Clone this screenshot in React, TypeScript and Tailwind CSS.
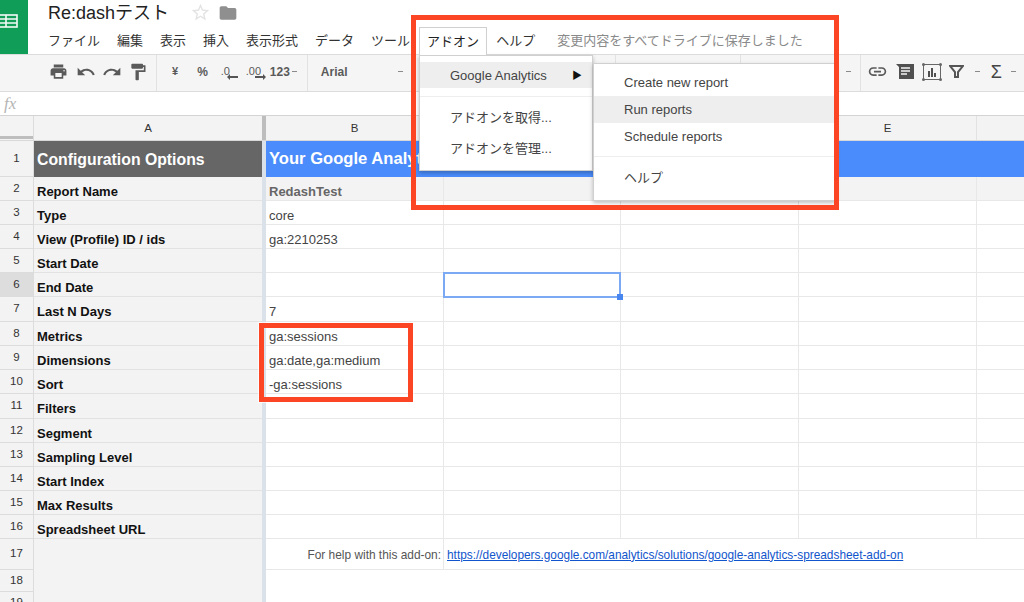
import React from "react";
import { MdPrint, MdUndo, MdRedo, MdFormatPaint, MdLink, MdFolder, MdStarBorder } from "react-icons/md";

const SANS = "font-['Liberation_Sans',Arial,sans-serif]";
const JP = "font-['Liberation_Sans','Noto_Sans_CJK_JP',sans-serif]";

const labels: [number, string, number][] = [
  [2, "Report Name", 24],
  [3, "Type", 24],
  [4, "View (Profile) ID / ids", 24],
  [5, "Start Date", 24],
  [6, "End Date", 24],
  [7, "Last N Days", 25],
  [8, "Metrics", 24],
  [9, "Dimensions", 24],
  [10, "Sort", 24],
  [11, "Filters", 25],
  [12, "Segment", 24],
  [13, "Sampling Level", 24],
  [14, "Start Index", 24],
  [15, "Max Results", 24],
  [16, "Spreadsheet URL", 24],
];
const values: Record<number, string> = {
  2: "RedashTest",
  3: "core",
  4: "ga:2210253",
  7: "7",
  8: "ga:sessions",
  9: "ga:date,ga:medium",
  10: "-ga:sessions",
};

const Drop = () => <span className="w-[5px] h-px bg-[#8a8a8a] block" />;
const Sep = () => <span className="w-px h-[36px] mt-[3px] bg-[#e2e2e2] block" />;

function Row({ n, label, h }: { n: number; label: string; h: number }) {
  const v = values[n];
  const fill = n === 2 ? "bg-[#f3f3f3]" : "";
  return (
    <div className="flex" style={{ height: h }}>
      <div className={`w-[34px] shrink-0 border-r border-b border-[#dcdcdc] flex items-center justify-center text-[11.5px] text-[#333] ${n === 6 ? "bg-[#dddddd]" : "bg-[#f3f3f3]"}`}>
        {n}
      </div>
      <div className="w-[228px] shrink-0 bg-[#f3f3f3] border-b border-[#e2e2e2] flex items-center pl-[3px] pt-[6px] text-[13px] font-bold text-[#111]">
        {label}
      </div>
      <div className="w-[4px] shrink-0 bg-[#dae1e9]" />
      <div className={`w-[178px] shrink-0 border-r border-b border-[#e8e8e8] flex items-center pl-[3px] pt-[6px] text-[13px] ${n === 2 ? "bg-[#f3f3f3] font-bold text-[#666]" : "text-[#444]"}`}>
        {v}
      </div>
      {[177, 178, 178].map((w, i) => (
        <div key={i} className={`shrink-0 border-r border-b border-[#e8e8e8] ${fill}`} style={{ width: w }} />
      ))}
      <div className={`flex-1 border-b border-[#e8e8e8] ${fill}`} />
    </div>
  );
}

export default function App() {
  return (
    <div className={`relative w-[1024px] h-[602px] overflow-hidden bg-white ${SANS}`}>
      {/* top bar */}
      <div className="flex h-[54px] bg-white">
        <div className="w-[28px] bg-[#0f9d58] flex items-start pt-[13px] overflow-hidden">
          <svg width="19" height="17" viewBox="0 0 19 17" fill="none" stroke="#fff" strokeWidth="1.6" opacity="0.95">
            <rect x="-3" y="2" width="20" height="12" />
            <path d="M-3 6h20M-3 10h20M6 2v12" />
          </svg>
        </div>
        <div className="pl-[20px] flex flex-col">
          <div className="flex items-center h-[27px] pb-[2px]">
            <span className={`text-[18px] text-[#222] leading-none ${JP}`}>Re:dashテスト</span>
            <MdStarBorder className="ml-[21px] text-[#e3e3e3]" size={21} />
            <MdFolder className="ml-[7px] text-[#8f8f8f]" size={20} />
          </div>
          <div className={`flex items-center h-[27px] pb-[1px] gap-[17px] text-[13px] text-[#333] ${JP} leading-none`}>
            {["ファイル", "編集", "表示", "挿入", "表示形式", "データ", "ツール"].map((t) => (
              <span key={t}>{t}</span>
            ))}
            <span className="-mx-[8px] px-[7px] h-[28px] mt-[1px] border border-b-0 border-[#d0d0d0] flex items-center bg-white relative z-30 text-[#222]">
              アドオン
            </span>
            <span>ヘルプ</span>
            <span className="ml-[5px] text-[#8a8a8a]">変更内容をすべてドライブに保存しました</span>
          </div>
        </div>
      </div>

      {/* toolbar */}
      <div className="flex items-center h-[38px] bg-[#f5f5f5] border-y border-[#dcdcdc] text-[#5a5a5a] font-bold text-[11px] pl-[49px] pb-[3px]">
        <MdPrint size={19} />
        <MdUndo size={20} className="ml-[8px]" />
        <MdRedo size={20} className="ml-[6px]" />
        <MdFormatPaint size={20} className="ml-[6px]" />
        <span className="ml-[8px]"><Sep /></span>
        <span className="ml-[15px]">¥</span>
        <span className="ml-[19px] text-[12px]">%</span>
        <span className="ml-[13px] relative w-[15px] font-normal">.0
          <svg className="absolute left-[6px] top-[11px]" width="11" height="6" viewBox="0 0 11 6"><path d="M0 3l3-3v2h8v2H3v2z" fill="#555" /></svg>
        </span>
        <span className="ml-[10px] relative w-[15px] font-normal">.00
          <svg className="absolute left-[9px] top-[11px]" width="11" height="6" viewBox="0 0 11 6"><path d="M11 3L8 0v2H0v2h8v2z" fill="#555" /></svg>
        </span>
        <span className="ml-[9px] text-[12px]">123</span>
        <span className="ml-[2px]"><Drop /></span>
        <span className="ml-[10px]"><Sep /></span>
        <span className="ml-[13px] text-[12px] w-[77px]">Arial</span>
        <Drop />
        <span className="ml-[9px]"><Sep /></span>
        <span className="ml-[202px]"><Sep /></span>
        <span className="ml-[124px]"><Sep /></span>
        <span className="ml-[105px]"><Drop /></span>
        <span className="ml-[9px]"><Sep /></span>
        <MdLink size={21} className="ml-[6px]" />
        <svg className="ml-[8px]" width="18" height="16" viewBox="0 0 18 16">
          <path d="M0 0h18v15H3V3z" fill="#505050" />
          <path d="M5 4h9M5 7h9M5 10h6" stroke="#f5f5f5" strokeWidth="1.3" />
        </svg>
        <svg className="ml-[8px]" width="20" height="18" viewBox="0 0 20 18" fill="none">
          <rect x="1.5" y="1.5" width="17" height="15" stroke="#666" />
          <circle cx="1.5" cy="1.5" r="1.5" fill="#666" /><circle cx="18.5" cy="1.5" r="1.5" fill="#666" />
          <circle cx="1.5" cy="16.5" r="1.5" fill="#666" /><circle cx="18.5" cy="16.5" r="1.5" fill="#666" />
          <path d="M6 8h2v6H6zM9 5h2v9H9zM12 10h2v4h-2z" fill="#505050" />
        </svg>
        <svg className="ml-[7px]" width="15" height="15" viewBox="0 0 15 15" fill="none">
          <path d="M1 2h13L9 8v5H6V8z" stroke="#555" strokeWidth="2" />
        </svg>
        <span className="ml-[11px]"><Drop /></span>
        <span className="ml-[11px] text-[18px] font-normal leading-none text-[#444]">Σ</span>
        <span className="ml-[9px]"><Drop /></span>
      </div>

      {/* formula bar */}
      <div className="h-[24px] bg-white flex items-center pl-[4px] border-b border-[#d4d4d4]">
        <span className="font-['Liberation_Serif',serif] italic text-[17px] text-[#b5b5b5] leading-none">fx</span>
      </div>

      {/* column headers */}
      <div className="flex h-[25px] bg-[#f3f3f3] text-[11.5px] text-[#333] border-b border-[#d8d8d8]">
        <div className="w-[34px] shrink-0 flex flex-col justify-end border-r border-[#dcdcdc]">
          <div className="h-[3px] bg-[#bdbdbd] mb-[1px]" />
        </div>
        <div className="w-[228px] shrink-0 flex items-center justify-center pt-[1px]">A</div>
        <div className="w-[4px] shrink-0 bg-[#bdbdbd]" />
        {[["B", 178], ["", 177], ["", 178], ["E", 178]].map(([c, w], i) => (
          <div key={i} className="shrink-0 flex items-center justify-center pt-[1px] border-r border-[#e2e2e2]" style={{ width: w as number }}>{c}</div>
        ))}
        <div className="flex-1" />
      </div>

      {/* row 1 */}
      <div className="flex h-[36px]">
        <div className="w-[34px] shrink-0 bg-[#f3f3f3] border-r border-b border-[#dcdcdc] flex items-center justify-center text-[11.5px] text-[#333]">1</div>
        <div className="w-[228px] shrink-0 bg-[#666666] text-white font-bold text-[15.8px] flex items-center pl-[3px] pt-[1px]">Configuration Options</div>
        <div className="w-[4px] shrink-0 bg-[#dae1e9]" />
        <div className="flex-1 bg-[#4a8cfb] text-white font-bold text-[16.6px] flex items-center pl-[3px] pt-[1px]">Your Google Analytics</div>
      </div>

      {labels.map(([n, l, h]) => (
        <Row key={n} n={n} label={l} h={h} />
      ))}

      {/* row 17 */}
      <div className="flex h-[31px]">
        <div className="w-[34px] shrink-0 bg-[#f3f3f3] border-r border-b border-[#dcdcdc] flex items-center justify-center text-[11.5px] text-[#333]">17</div>
        <div className="w-[228px] shrink-0 bg-[#f3f3f3]" />
        <div className="w-[4px] shrink-0 bg-[#dae1e9]" />
        <div className="w-[178px] shrink-0 border-r border-b border-[#e8e8e8] flex items-center justify-end pr-[2px] pt-[3px] text-[11.9px] text-[#555] whitespace-nowrap">
          For help with this add-on:
        </div>
        <div className="flex-1 border-b border-[#e8e8e8] flex items-center pl-[3px] pt-[3px] text-[11.85px] text-[#1155cc] underline whitespace-nowrap">
          https://developers.google.com/analytics/solutions/google-analytics-spreadsheet-add-on
        </div>
      </div>

      {/* rows 18-19 */}
      {[18, 19].map((n) => (
        <div key={n} className="flex h-[22px]">
          <div className="w-[34px] shrink-0 bg-[#f3f3f3] border-r border-b border-[#dcdcdc] flex items-center justify-center text-[11.5px] text-[#333]">{n}</div>
          <div className="w-[228px] shrink-0 bg-[#f3f3f3]" />
          <div className="w-[4px] shrink-0 bg-[#dae1e9]" />
          <div className="flex-1 bg-white" />
        </div>
      ))}

      {/* selected cell */}
      <div className="absolute left-[443px] top-[272px] w-[178px] h-[26px] border-2 border-[#7ba9f3]" />
      <div className="absolute left-[617px] top-[294px] w-[6px] h-[6px] bg-[#4a86f0]" />

      {/* addon menu */}
      <div className={`absolute left-[419px] top-[55px] w-[174px] h-[116px] bg-white z-20 border border-[#d0d0d0] shadow-[0_2px_4px_rgba(0,0,0,0.25)] py-[6px] text-[13px] text-[#444] ${JP}`}>
        <div className="h-[26px] bg-[#eeeeee] flex items-center pl-[30px] pt-[1px] justify-between pr-[10px]">
          <span>Google Analytics</span>
          <span className="text-[10px] text-[#111]">▶</span>
        </div>
        <div className="h-px bg-[#eeeeee] mt-[8px] mb-[8px]" />
        <div className="h-[26px] flex items-center pl-[30px]">アドオンを取得...</div>
        <div className="h-[26px] mt-[5px] flex items-center pl-[30px]">アドオンを管理...</div>
      </div>

      {/* submenu */}
      <div className={`absolute left-[593px] top-[63px] w-[243px] h-[138px] bg-white z-20 border border-[#d0d0d0] shadow-[0_2px_4px_rgba(0,0,0,0.25)] pt-[5px] text-[13px] text-[#444] ${JP}`}>
        <div className="h-[27px] flex items-center pl-[30px]">Create new report</div>
        <div className="h-[27px] flex items-center pl-[30px] bg-[#eeeeee]">Run reports</div>
        <div className="h-[27px] flex items-center pl-[30px]">Schedule reports</div>
        <div className="h-px bg-[#eeeeee] mt-[6px] mb-[7px]" />
        <div className="h-[27px] flex items-center pl-[30px]">ヘルプ</div>
      </div>

      {/* annotations */}
      <div className="absolute z-40 left-[411px] top-[15px] w-[428px] h-[195px] border-[5px] border-[#fc4524]" />
      <div className="absolute z-40 left-[259px] top-[323px] w-[154px] h-[79px] border-[5px] border-[#fc4524] outline outline-1 outline-white/70" />
    </div>
  );
}
